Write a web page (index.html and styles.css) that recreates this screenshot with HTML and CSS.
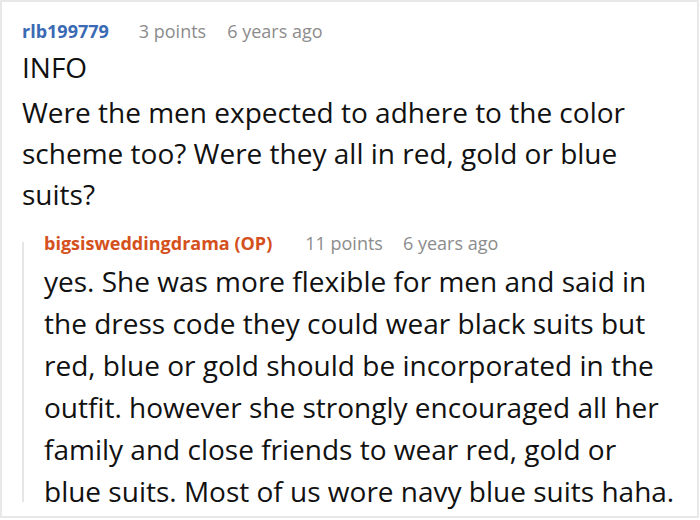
FILE: index.html
```html
<!DOCTYPE html>
<html>
<head>
<meta charset="utf-8">
<link rel="stylesheet" href="styles.css">
</head>
<body>
<div class="card">
  <div class="meta">
    <span class="user">rlb199779</span>
    <span class="info">3 points</span>
    <span class="info">6 years ago</span>
  </div>
  <p class="text lead">INFO</p>
  <p class="text">Were the men expected to adhere to the color scheme too? Were they all in red, gold or blue suits?</p>
  <div class="reply">
    <div class="rail"></div>
    <div class="reply-body">
      <div class="meta meta-reply">
        <span class="user op">bigsisweddingdrama (OP)</span>
        <span class="info">11 points</span>
        <span class="info">6 years ago</span>
      </div>
      <p class="text text-reply">yes. She was more flexible for men and said in the dress code they could wear black suits but red, blue or gold should be incorporated in the outfit. however she strongly encouraged all her family and close friends to wear red, gold or blue suits. Most of us wore navy blue suits haha.</p>
    </div>
  </div>
</div>
</body>
</html>
```
FILE: styles.css
```css
html, body {
  margin: 0;
  padding: 0;
  background: #ffffff;
}
.card {
  box-sizing: border-box;
  width: 699px;
  height: 518px;
  border: 2px solid #e8e8e8;
  padding: 16px 20px 0 20px;
  font-family: "Open Sans", "Noto Sans", sans-serif;
  overflow: hidden;
}
.meta {
  display: flex;
  gap: 21px;
  font-size: 18px;
  line-height: 26px;
  color: #8c8c8c;
  white-space: nowrap;
}
.user {
  font-weight: 700;
  color: #3b6ab4;
  margin-right: 9px;
}
.text {
  margin: 0;
  font-size: 28px;
  line-height: 41px;
  color: #111111;
}
.lead {
  margin-top: 3px;
  margin-bottom: 4px;
}
.reply {
  display: flex;
  margin-top: 15px;
}
.rail {
  flex: 0 0 2px;
  background: #e6e6e6;
  margin: 12px 0 10px 0;
}
.reply-body {
  flex: 1;
  padding-left: 20px;
}
.meta-reply {
  gap: 20px;
}
.meta-reply .user {
  margin-right: 13px;
}
.op {
  color: #d4501c;
}
.text-reply {
  line-height: 42px;
  margin-top: 4px;
}
```
